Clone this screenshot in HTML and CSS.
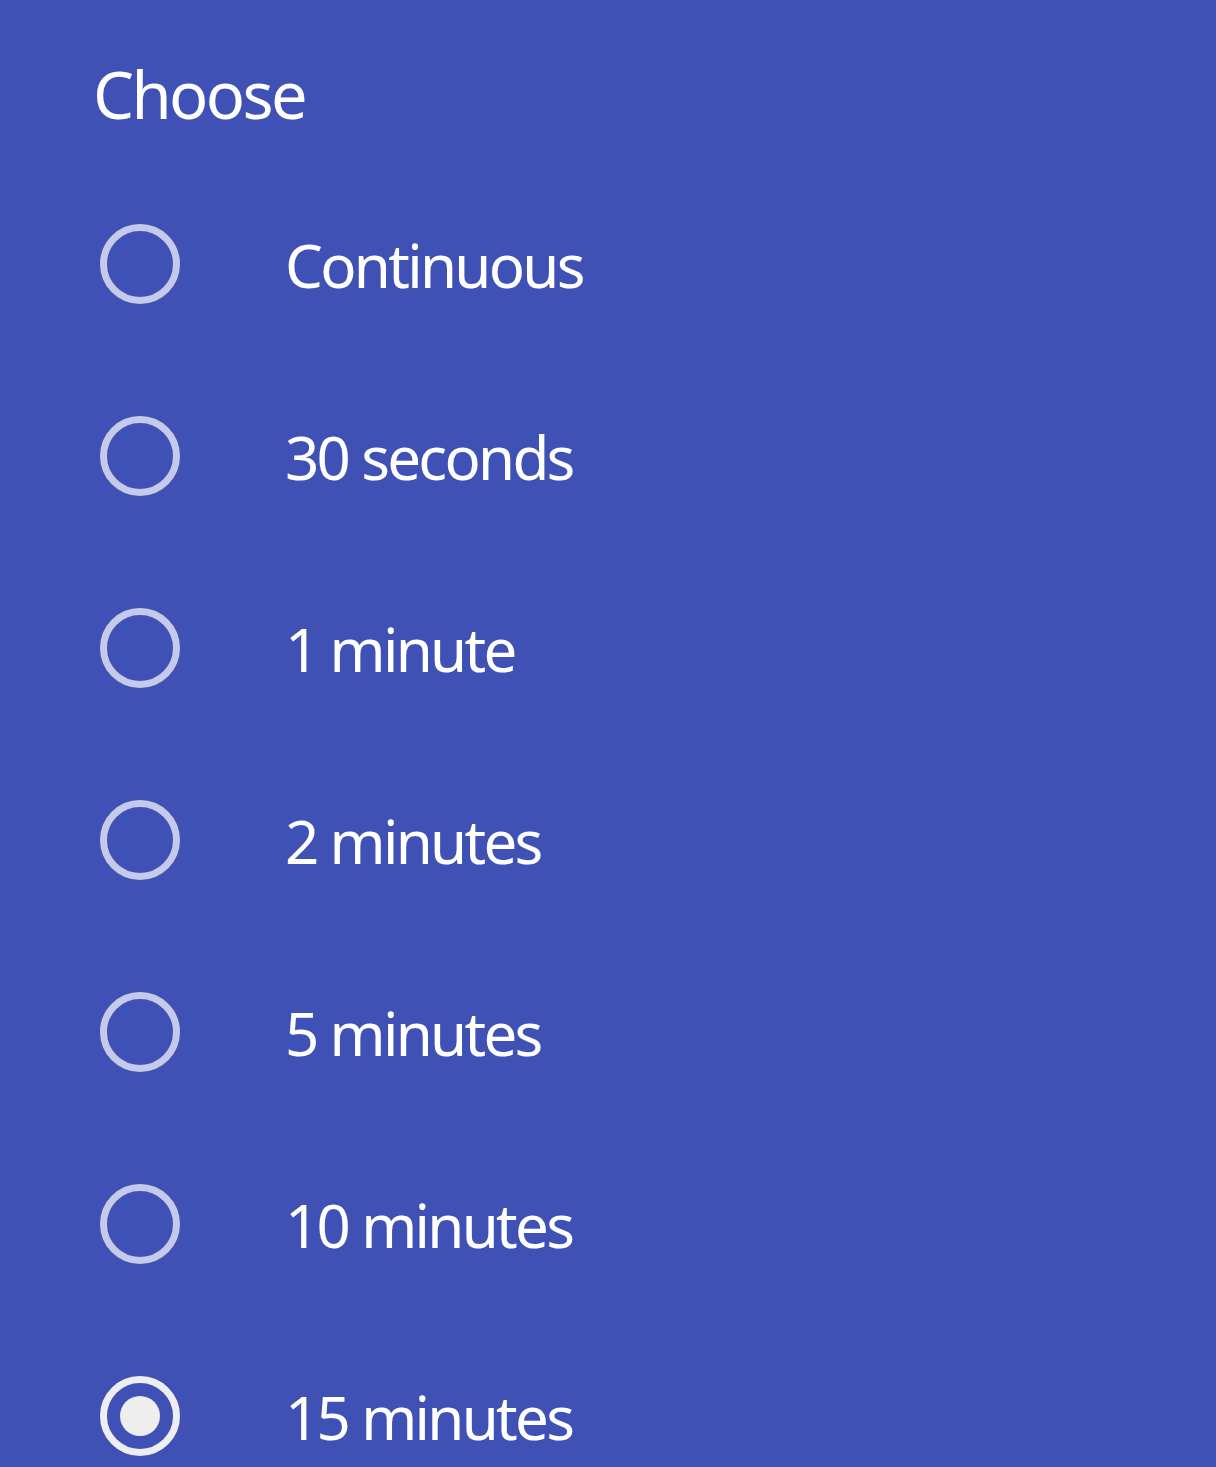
FILE: index.html
```html
<!DOCTYPE html>
<html lang="en">
<head>
<meta charset="UTF-8">
<meta name="viewport" content="width=device-width, initial-scale=1.0">
<title>Choose</title>
<link rel="stylesheet" href="styles.css">
</head>
<body>

<div class="dialog">
    <h2 class="title">Choose</h2>
    <ul class="options">
        <li class="option"><span class="radio"></span><span class="label">Continuous</span></li>
        <li class="option"><span class="radio"></span><span class="label">30 seconds</span></li>
        <li class="option"><span class="radio"></span><span class="label">1 minute</span></li>
        <li class="option"><span class="radio"></span><span class="label">2 minutes</span></li>
        <li class="option"><span class="radio"></span><span class="label">5 minutes</span></li>
        <li class="option"><span class="radio"></span><span class="label">10 minutes</span></li>
        <li class="option selected"><span class="radio"></span><span class="label">15 minutes</span></li>
    </ul>
</div>

</body>
</html>
```

FILE: styles.css
```css
html, body {
    margin: 0;
    padding: 0;
    height: 100%;
}

body {
    font-family: "Noto Sans", sans-serif;
    background-color: #3f51b5;
    color: #fff;
    overflow: hidden;
}

.dialog {
    padding: 0 0 0 93px;
}

.title {
    margin: 0;
    height: 168px;
    padding-top: 49px;
    box-sizing: border-box;
    font-size: 65px;
    font-weight: normal;
    line-height: 90px;
    letter-spacing: -2.6px;
}

.options {
    list-style: none;
    margin: 0;
    padding: 0;
}

.option {
    display: flex;
    align-items: center;
    height: 192px;
}

.radio {
    width: 80px;
    height: 80px;
    margin-left: 7px;
    box-sizing: border-box;
    border: 7px solid #c5cae9;
    border-radius: 50%;
    display: flex;
    align-items: center;
    justify-content: center;
    flex-shrink: 0;
}

.selected .radio {
    border-color: #eeeeee;
}

.selected .radio::after {
    content: "";
    width: 40px;
    height: 40px;
    border-radius: 50%;
    background-color: #eeeeee;
}

.label {
    margin-left: 105px;
    font-size: 60px;
    letter-spacing: -2.7px;
    line-height: 1;
    padding-top: 2px;
}
```
